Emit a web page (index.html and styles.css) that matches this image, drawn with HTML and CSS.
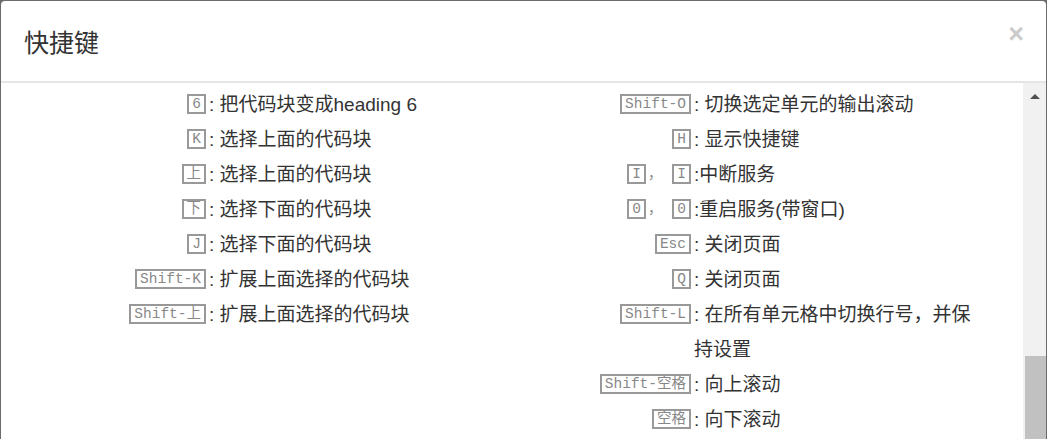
FILE: index.html
```html
<!DOCTYPE html>
<html>
<head>
    <meta charset="utf-8">
    <title>快捷键</title>
    <link rel="stylesheet" href="styles.css">
</head>
<body>
    <div class="modal">
        <div class="modal-header">
            <h4 class="modal-title">快捷键</h4>
            <span class="close">×</span>
        </div>
        <div class="modal-body">
            <div class="shortcuts">
                <div class="column">
                    <div class="row"><span class="key"><kbd>6</kbd></span><span class="descr">: 把代码块变成heading 6</span></div>
                    <div class="row"><span class="key"><kbd>K</kbd></span><span class="descr">: 选择上面的代码块</span></div>
                    <div class="row"><span class="key"><kbd>上</kbd></span><span class="descr">: 选择上面的代码块</span></div>
                    <div class="row"><span class="key"><kbd>下</kbd></span><span class="descr">: 选择下面的代码块</span></div>
                    <div class="row"><span class="key"><kbd>J</kbd></span><span class="descr">: 选择下面的代码块</span></div>
                    <div class="row"><span class="key"><kbd>Shift-K</kbd></span><span class="descr">: 扩展上面选择的代码块</span></div>
                    <div class="row"><span class="key"><kbd>Shift-上</kbd></span><span class="descr">: 扩展上面选择的代码块</span></div>
                </div>
                <div class="column">
                    <div class="row"><span class="key"><kbd>Shift-O</kbd></span><span class="descr">: 切换选定单元的输出滚动</span></div>
                    <div class="row"><span class="key"><kbd>H</kbd></span><span class="descr">: 显示快捷键</span></div>
                    <div class="row"><span class="key"><kbd>I</kbd>， <kbd>I</kbd></span><span class="descr">:中断服务</span></div>
                    <div class="row"><span class="key"><kbd>0</kbd>， <kbd>0</kbd></span><span class="descr">:重启服务(带窗口)</span></div>
                    <div class="row"><span class="key"><kbd>Esc</kbd></span><span class="descr">: 关闭页面</span></div>
                    <div class="row"><span class="key"><kbd>Q</kbd></span><span class="descr">: 关闭页面</span></div>
                    <div class="row"><span class="key"><kbd>Shift-L</kbd></span><span class="descr">: 在所有单元格中切换行号，并保持设置</span></div>
                    <div class="row"><span class="key"><kbd>Shift-空格</kbd></span><span class="descr">: 向上滚动</span></div>
                    <div class="row"><span class="key"><kbd>空格</kbd></span><span class="descr">: 向下滚动</span></div>
                </div>
            </div>
            <div class="scrollbar">
                <div class="arrow"></div>
                <div class="thumb"></div>
            </div>
        </div>
    </div>
</body>
</html>
```

FILE: styles.css
```css
html {
    background-color: #6b6b6b;
}
body {
    margin: 0;
    padding: 1px 1px 0 1px;
    height: 439px;
    box-sizing: border-box;
    overflow: hidden;
    font-family: "Liberation Sans", "Noto Sans CJK SC", sans-serif;
}
.modal {
    background-color: #fff;
    border-radius: 4px 4px 0 0;
    height: 460px;
    display: flex;
    flex-direction: column;
}
.modal-header {
    height: 80px;
    flex: none;
    border-bottom: 2px solid #e5e5e5;
    display: flex;
    justify-content: space-between;
    align-items: center;
    padding: 0 22px 0 23px;
}
.modal-title {
    margin: 0;
    font-size: 25px;
    font-weight: normal;
    color: #333;
}
.close {
    align-self: flex-start;
    margin-top: 20px;
    font-size: 27px;
    line-height: 27px;
    font-weight: bold;
    color: #000;
    opacity: 0.2;
}
.modal-body {
    flex: 1;
    display: flex;
    min-height: 0;
}
.shortcuts {
    flex: 1;
    padding: 4px 0 0 15px;
    display: grid;
    grid-template-columns: 485px 485px;
    align-content: start;
}
.row {
    display: flex;
    line-height: 35px;
    font-size: 19px;
    color: #333;
}
.key {
    width: 192px;
    flex: none;
    text-align: right;
    font-family: "Liberation Mono", "Noto Sans CJK SC", monospace;
    font-size: 14px;
    color: #888;
}
kbd {
    display: inline-block;
    font-family: inherit;
    font-size: 14.5px;
    line-height: 16px;
    padding: 0 3px;
    margin: 0 2px;
    border: 2px solid #999;
    vertical-align: middle;
    color: #888;
}
.descr {
    flex: 1;
    padding-left: 1px;
}
.scrollbar {
    width: 23px;
    flex: none;
    background-color: #f1f1f1;
    display: flex;
    flex-direction: column;
    align-items: center;
}
.arrow {
    margin-top: 11px;
    width: 0;
    height: 0;
    border-left: 5px solid transparent;
    border-right: 5px solid transparent;
    border-bottom: 5px solid #505050;
}
.thumb {
    margin-top: 257px;
    align-self: stretch;
    margin-left: 2px;
    flex: 1;
    background-color: #c1c1c1;
}
```
